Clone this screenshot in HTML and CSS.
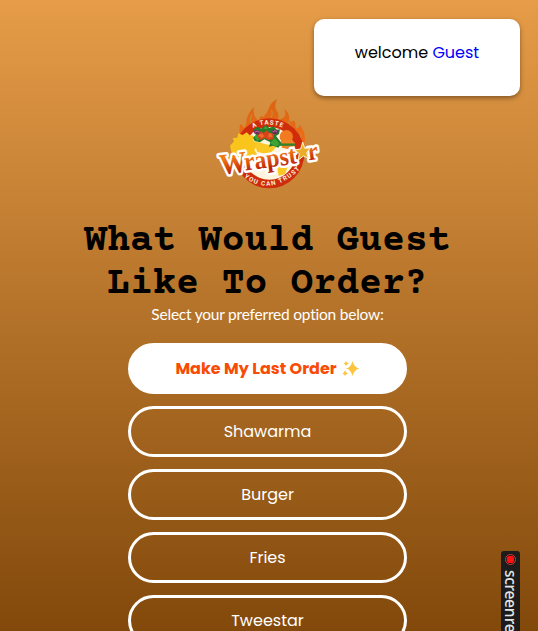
FILE: index.html
```html
<!DOCTYPE html>
<html lang="en">
<head>
<meta charset="utf-8">
<title>Wrapstar</title>
<link rel="stylesheet" href="styles.css">
</head>
<body>
<header class="welcome"><p>welcome <a href="#">Guest</a></p></header>
<main class="order">
<svg class="logo" viewBox="0 12 360 300" role="img" aria-label="Wrapstar">
  <defs>
    <linearGradient id="word" x1="0" y1="0" x2="0" y2="1"><stop offset=".35" stop-color="#f27812"/><stop offset=".8" stop-color="#bd230b"/></linearGradient>
    <linearGradient id="fire" x1="0" y1="0" x2="0" y2="1"><stop offset="0" stop-color="#d96512"/><stop offset="1" stop-color="#f36b16"/></linearGradient>
    <path id="top" d="M135 108Q178 86 230 109"/>
    <path id="bottom" d="M108 256Q190 318 280 228"/>
  </defs>
  <path fill="url(#fire)" d="M96 126Q92 104 98 95Q105 102 108 108Q115 102 115 85Q120 61 139 44Q132 65 146 80Q152 90 153 81Q157 69 166 75Q180 60 184 45Q190 30 207 21Q198 43 205 55Q215 66 210 80Q220 85 230 73Q235 60 227 51Q246 62 244 84Q251 95 258 84Q264 94 263 108Q272 113 274 98Q292 118 291 144L286 165L110 153Z"/>
  <g fill="none" stroke="#c98435" stroke-width="4"><path d="M130 95Q123 78 133 67M183 83Q198 70 190 55M250 112Q248 97 240 86M274 142Q283 132 279 119"/></g>
  <circle cx="184" cy="184" r="105" fill="#ce2c0b"/>
  <circle cx="184" cy="184" r="79" fill="#fff4dc"/>
  <path fill="#f9c51c" d="M66 161L78 148L74 138L88 137L91 124L104 129L116 121L125 130L137 131L136 145L148 160L139 174L151 193L75 201Z"/>
  <path fill="#fac825" d="M139 148L205 164L184 188L147 179ZM207 221L243 215L231 246L212 252Z"/>
  <circle cx="235" cy="134" r="20" fill="#f27a20"/><path fill="#ee8422" d="M218 147Q246 136 262 154L249 173L222 167Z"/>
  <path fill="#217c2b" d="M135 114L148 104L159 110L174 99L184 108L197 103L206 113L216 112L213 126L204 132L221 154L211 167L195 161L183 164L187 151L169 142L156 151L140 147L135 137L144 129Z"/>
  <path fill="#40a331" d="M138 133L149 128L156 139L148 147ZM185 153L201 139L217 158L203 163ZM166 110L173 102L180 112Z"/>
  <path fill="#d64419" d="M146 126L160 117L166 124L177 114L184 123L199 126L196 142L180 144L171 138L155 145Z"/>
  <path fill="#f1682d" d="M151 130L161 124L169 132L161 139ZM181 126L189 122L194 135L181 137Z"/>
  <path fill="#752a5d" d="M137 117Q148 110 157 119L151 128L138 124ZM190 118Q203 107 212 117Q208 130 196 126Z"/>
  <path fill="none" stroke="#d69bb9" stroke-width="2" d="M140 121Q148 114 154 120M194 120Q202 112 207 119"/>
  <path stroke="#35812c" stroke-width="7" d="M211 158H262"/>
  <text class="ring"><textPath href="#top" textLength="91">A TASTE</textPath></text>
  <text class="ring"><textPath href="#bottom" textLength="188">YOU CAN TRUST</textPath></text>
  <g transform="rotate(-8 180 205)">
    <text class="word initial" x="34" y="229" textLength="82" lengthAdjust="spacingAndGlyphs">W</text>
    <text class="word" x="108" y="226" textLength="158" lengthAdjust="spacingAndGlyphs">rapst</text>
    <text class="word" x="301" y="222" textLength="31" lengthAdjust="spacingAndGlyphs">r</text>
  </g>
  <path class="star" d="M284 150L290 169L307 168L296 182L301 199L286 192L270 205L274 185L260 174L278 171Z"/>
</svg>
<h1>What Would Guest<br>Like To Order?</h1>
<p class="hint">Select your preferred option below:</p>
<nav class="options">
  <button class="primary"><span>Make My Last Order</span>
    <svg viewBox="0 0 18 18" class="sparkle"><path d="M10.500 1Q12 7.500 17.500 8.500Q12 9.500 10.500 16Q9 9.500 4 8.500Q9 7.500 10.500 1ZM4 1Q4.500 3 7 3.500Q4.500 4 4 6Q3.500 4 1.500 3.500Q3.500 3 4 1ZM3 10Q3.500 13 6 13.500Q3.500 14 3 16Q2.500 14 .5 13.500Q2.500 13 3 10Z"/></svg>
  </button>
  <button>Shawarma</button>
  <button>Burger</button>
  <button>Fries</button>
  <button>Tweestar</button>
</nav>
</main>
<aside class="recorder"><i class="dot"></i><span>screen re</span></aside>
</body>
</html>
```
FILE: styles.css
```css
* { box-sizing: border-box; }
html { height: 100%; overflow: hidden; }
body {
  margin: 0;
  height: 631px;
  overflow: hidden;
  position: relative;
  display: flex;
  flex-direction: column;
  background: linear-gradient(#e69c48, #82490b);
  font-family: Poppins, Inter, sans-serif;
}
.welcome {
  align-self: flex-end;
  flex: none;
  width: 206px;
  height: 77px;
  margin: 19px 18px 0 0;
  padding-top: 22px;
  border-radius: 10px;
  background: #fff;
  box-shadow: 0 2px 5px #0006;
  text-align: center;
  font-size: 16px;
  line-height: 24px;
}
.welcome p { margin: 0; }
.welcome a { color: #00f; text-decoration: none; }
.order {
  width: 535px;
  display: flex;
  flex-direction: column;
  align-items: center;
}
.logo { flex: none; width: 120px; height: 100px; }
.ring {
  font: bold 19px Roboto, sans-serif;
  fill: #fff0dc;
}
.word {
  font: bold 78px "Liberation Serif", serif;
  fill: url(#word);
  stroke: #fff;
  stroke-width: 15px;
  stroke-linejoin: round;
  paint-order: stroke;
}
.initial { font-size: 90px; }
.star { fill: #e9ae25; stroke: #fff5da; stroke-width: 3px; }
h1 {
  margin: 24px 0 0;
  font: bold 38.2px/43px "Courier Prime", "Nimbus Mono PS", FreeMono, "Liberation Mono", monospace;
  text-align: center;
}
.hint {
  margin: -2px 0 0;
  color: #fff;
  font: 15.5px/20px "Gill Sans", Lato, sans-serif;
  letter-spacing: -.22px;
}
.options {
  display: flex;
  flex-direction: column;
  gap: 12px;
  width: 279px;
  margin-top: 19px;
}
.options button {
  height: 51px;
  flex: none;
  display: flex;
  align-items: center;
  justify-content: center;
  gap: 5px;
  border: 3px solid #fff;
  border-radius: 26px;
  background: transparent;
  color: #fff;
  font: 16px Poppins, Inter, sans-serif;
}
.options .primary {
  background: #fff;
  color: #f84b05;
  font-weight: 700;
}
.sparkle { width: 18px; height: 18px; fill: #fcc33c; }
.recorder {
  position: absolute;
  left: 501px;
  top: 551px;
  width: 19px;
  height: 80px;
  padding-top: 3px;
  border-radius: 3px 3px 0 0;
  background: #1c1c1c;
  color: #e5e5e5;
  display: flex;
  flex-direction: column;
  align-items: center;
  gap: 5px;
  font: 500 15.5px/19px "Noto Sans", sans-serif;
}
.recorder span { writing-mode: vertical-rl; white-space: nowrap; word-spacing: -3px; letter-spacing: -.3px; }
.dot {
  flex: none;
  width: 11px;
  height: 11px;
  border: 1px solid #d33;
  border-radius: 50%;
  background: radial-gradient(circle, #f11 0 3.5px, #1c1c1c 4px);
}
```
